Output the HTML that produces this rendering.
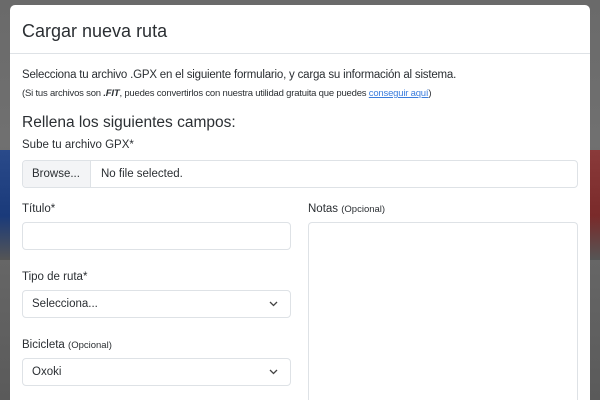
<!DOCTYPE html>
<html style="width:600px;height:400px;overflow:hidden"><head><style>
*{box-sizing:border-box;margin:0;padding:0}
body{width:600px;height:400px;overflow:hidden;background:linear-gradient(#6a6a6a 0,#707070 140px,#5a5a5a 400px);font-family:"Liberation Sans",sans-serif;color:#2b2f33;position:relative}
.bl{position:absolute;left:0;top:150px;width:12px;height:110px;background:linear-gradient(#2a4a8a,#1a3a7a 60%,#555);}
.br{position:absolute;right:0;top:150px;width:12px;height:110px;background:linear-gradient(#8a3a3a,#7a2a2a 60%,#555);}
.m{position:absolute;left:10px;top:5px;width:580px;height:395px;background:#fff;border-radius:5px 5px 0 0;overflow:hidden}
.h{height:49px;border-bottom:1px solid #dee2e6;padding:16px 12px 0;font-size:18px}
.t{position:absolute;white-space:nowrap}
.in{position:absolute;border:1px solid #dee2e6;border-radius:4px;background:#fff}
.chev{position:absolute;right:12px;top:10px}
</style></head><body>
<div class="bl"></div><div class="br"></div>
<div class="m">
<div class="h">Cargar nueva ruta</div>
<div class="t" style="left:12px;top:64px;font-size:11.5px;letter-spacing:-0.2px">Selecciona tu archivo .GPX en el siguiente formulario, y carga su información al sistema.</div>
<div class="t" style="left:12px;top:83px;font-size:9.5px;letter-spacing:-0.2px">(Si tus archivos son <b><i>.FIT</i></b>, puedes convertirlos con nuestra utilidad gratuita que puedes <span style="color:#3b7ddd;text-decoration:underline">conseguir aquí</span>)</div>
<div class="t" style="left:12px;top:109px;font-size:15.5px">Rellena los siguientes campos:</div>
<div class="t" style="left:12px;top:134px;font-size:11.5px">Sube tu archivo GPX*</div>
<div class="in" style="left:12px;top:155px;width:556px;height:28px;overflow:hidden">
<div style="position:absolute;left:0;top:0;width:68px;height:26px;background:#f3f4f6;border-right:1px solid #dee2e6;font-size:11.5px;padding:7px 0 0 9px">Browse...</div>
<div class="t" style="left:78px;top:7px;font-size:11.5px">No file selected.</div></div>
<div class="t" style="left:12px;top:198px;font-size:11.5px">Título*</div>
<div class="in" style="left:12px;top:217px;width:269px;height:28px"></div>
<div class="t" style="left:298px;top:198px;font-size:11.5px">Notas <span style="font-size:9.5px">(Opcional)</span></div>
<div class="in" style="left:298px;top:217px;width:270px;height:178px;border-bottom:none;border-radius:4px 4px 0 0"></div>
<div class="t" style="left:12px;top:266px;font-size:11.5px">Tipo de ruta*</div>
<div class="in" style="left:12px;top:285px;width:269px;height:28px"><div class="t" style="left:9px;top:7px;font-size:11.5px">Selecciona...</div><svg class="chev" width="9" height="6" viewBox="0 0 9 6"><path d="M1 1l3.5 3.5L8 1" fill="none" stroke="#444" stroke-width="1.3"/></svg></div>
<div class="t" style="left:12px;top:334px;font-size:11.5px">Bicicleta <span style="font-size:9.5px">(Opcional)</span></div>
<div class="in" style="left:12px;top:353px;width:269px;height:28px"><div class="t" style="left:9px;top:7px;font-size:11.5px">Oxoki</div><svg class="chev" width="9" height="6" viewBox="0 0 9 6"><path d="M1 1l3.5 3.5L8 1" fill="none" stroke="#444" stroke-width="1.3"/></svg></div>
</div>
</body></html>
